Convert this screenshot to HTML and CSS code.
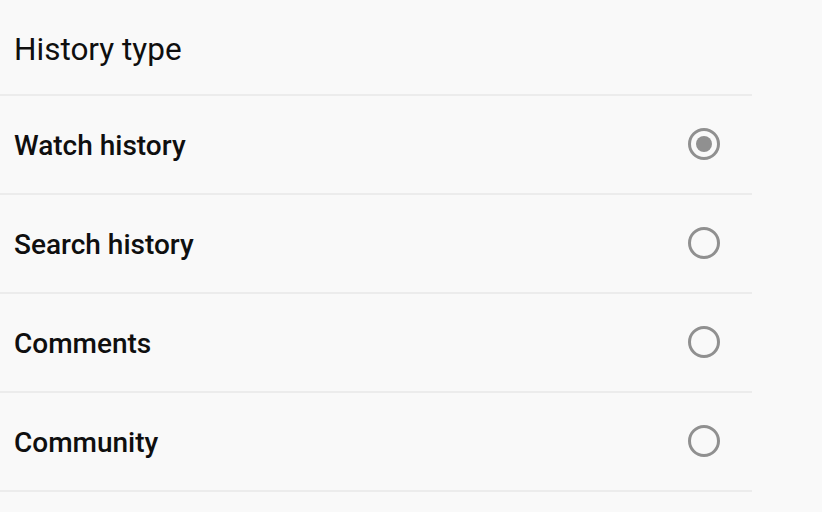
FILE: index.html
```html
<!DOCTYPE html>
<html>
<head>
<meta charset="utf-8">
<link rel="stylesheet" href="styles.css">
</head>
<body>
<div class="panel">
  <div class="header">History type</div>
  <div class="row"><span class="label">Watch history</span><span class="radio checked"></span></div>
  <div class="row"><span class="label">Search history</span><span class="radio"></span></div>
  <div class="row"><span class="label">Comments</span><span class="radio"></span></div>
  <div class="row"><span class="label">Community</span><span class="radio"></span></div>
</div>
</body>
</html>
```
FILE: styles.css
```css
html, body {
  margin: 0;
  padding: 0;
  background: #f9f9f9;
}
body {
  font-family: Roboto, "Noto Sans", sans-serif;
  color: #0f0f0f;
}
.panel {
  width: 752px;
}
.header {
  display: flex;
  align-items: center;
  padding-left: 14px;
  padding-top: 4px;
  font-size: 31.5px;
  font-weight: 400;
  border-bottom: 2px solid #ececec;
  box-sizing: border-box;
  height: 96px;
}
.row {
  height: 99px;
  box-sizing: border-box;
  border-bottom: 2px solid #ececec;
  display: flex;
  align-items: center;
  justify-content: space-between;
  padding-left: 14px;
  padding-right: 32px;
}
.label {
  font-size: 28px;
  font-weight: 500;
  padding-top: 1px;
}
.radio {
  width: 32px;
  height: 32px;
  margin-bottom: 1px;
  box-sizing: border-box;
  border: 3px solid #909090;
  border-radius: 50%;
  display: flex;
  align-items: center;
  justify-content: center;
}
.radio.checked::after {
  content: "";
  width: 16px;
  height: 16px;
  border-radius: 50%;
  background: #909090;
}
```
